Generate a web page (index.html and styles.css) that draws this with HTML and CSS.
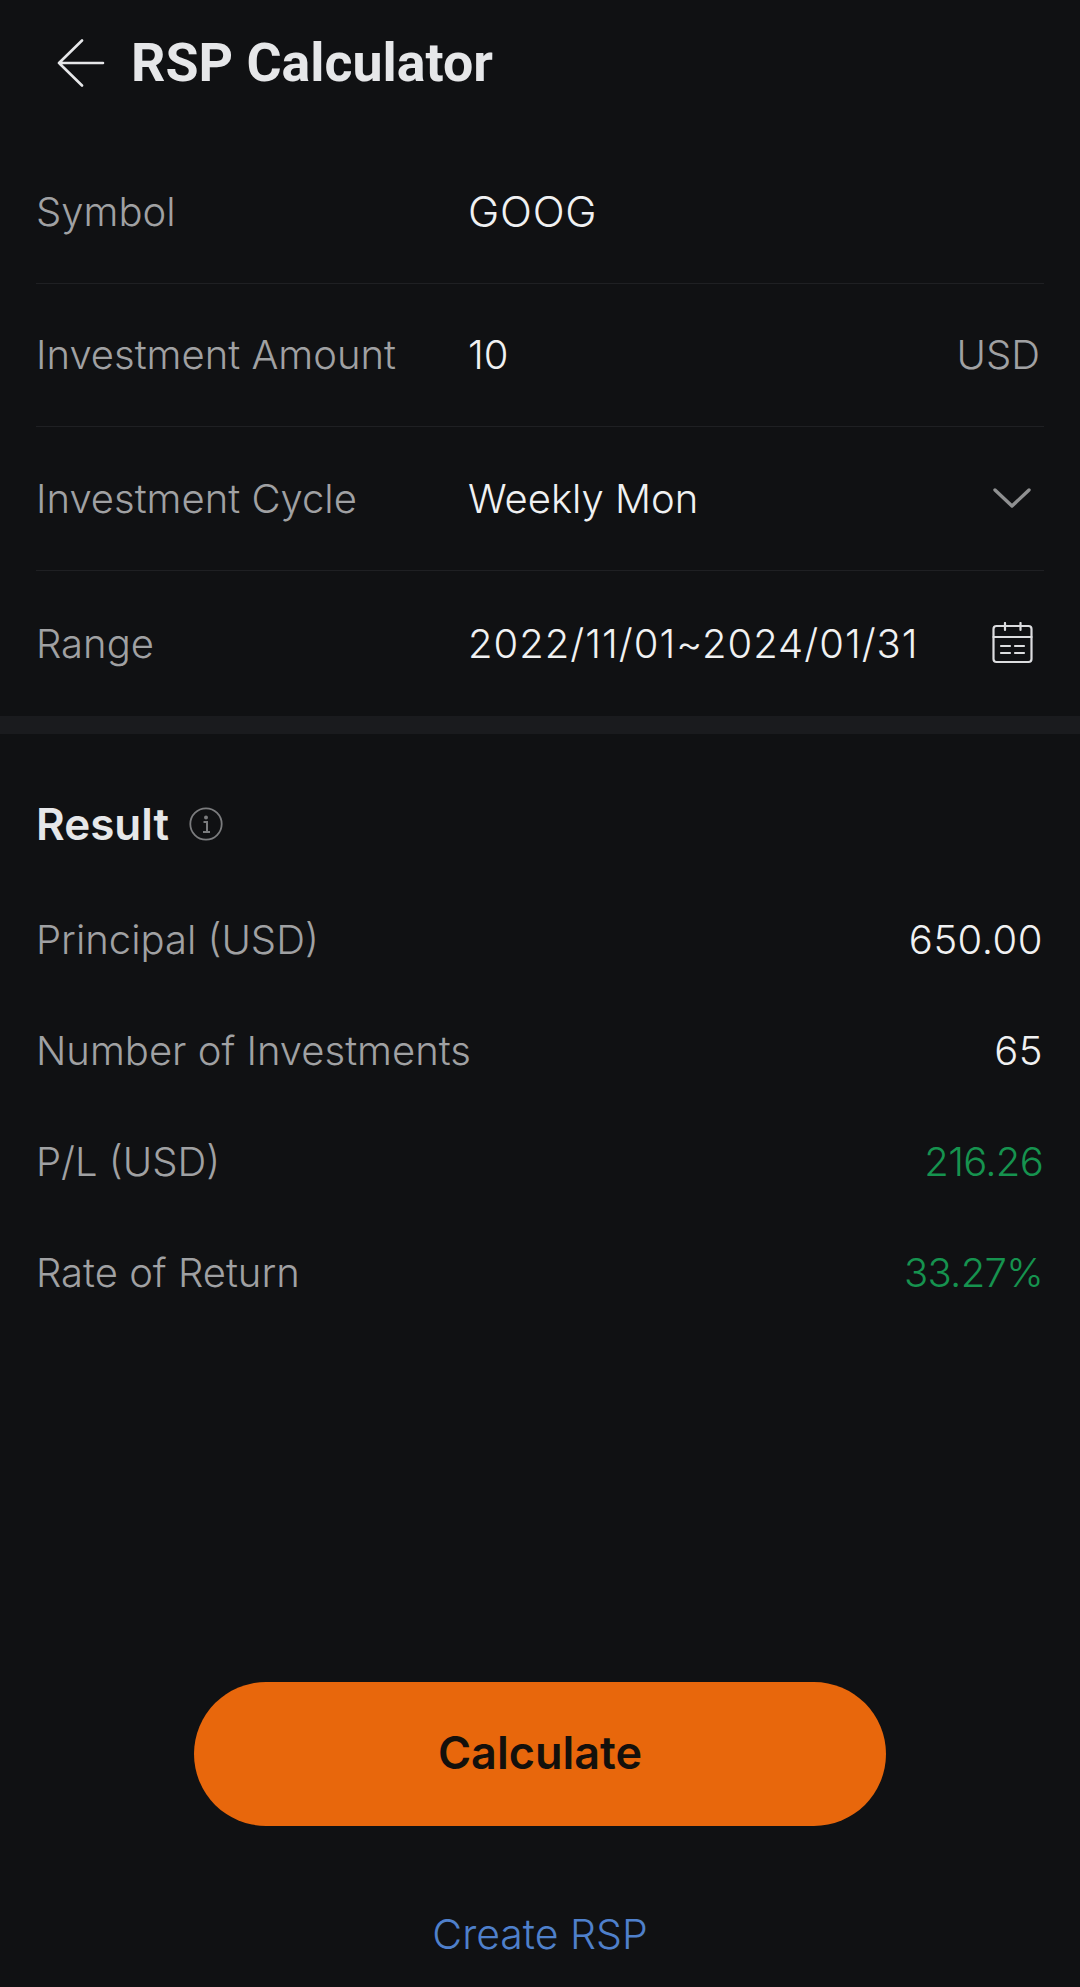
FILE: index.html
```html
<!DOCTYPE html>
<html lang="en">
<head>
<meta charset="utf-8">
<title>RSP Calculator</title>
<link rel="stylesheet" href="styles.css">
</head>
<body>
<div class="page">
  <header class="top">
    <svg class="back" width="48" height="48" viewBox="0 0 48 48" fill="none"><path d="M2 24H46M25 1.500L2 24L25 46.500" stroke="#e6e7e9" stroke-width="2.600" stroke-linecap="round" stroke-linejoin="round"/></svg>
    <h1 class="title">RSP Calculator</h1>
  </header>
  <section class="form">
    <div class="row"><span class="lab">Symbol</span><span class="val caps">GOOG</span></div>
    <div class="row"><span class="lab">Investment Amount</span><span class="val">10</span><span class="unit">USD</span></div>
    <div class="row"><span class="lab">Investment Cycle</span><span class="val">Weekly Mon</span>
      <svg class="chev" width="38" height="22" viewBox="0 0 38 22" fill="none"><path d="M2 3L19 19L36 3" stroke="#8f9091" stroke-width="3.400" stroke-linecap="round" stroke-linejoin="round"/></svg></div>
    <div class="row last"><span class="lab">Range</span><span class="val date">2022/11/01~2024/01/31</span>
      <svg class="cal" width="42" height="42" viewBox="0 0 42 42" fill="none" stroke="#dcdddf" stroke-width="2.200" stroke-linecap="round"><rect x="1.500" y="4" width="38" height="36" rx="3"/><path d="M1.500 15H39.500M13 1V8M28.500 1V8M9 24H18M23 24H32M9 31H18M23 31H32"/></svg></div>
  </section>
  <div class="band"></div>
  <section class="result">
    <div class="rhead"><h2 class="rtitle">Result</h2>
      <svg class="info" width="34" height="34" viewBox="0 0 34 34" fill="none"><circle cx="17" cy="17" r="15.700" stroke="#7b7c7e" stroke-width="1.800"/><circle cx="17" cy="10.500" r="2" fill="#7b7c7e"/><path d="M14.500 15H18V24.500M14 25H21" stroke="#7b7c7e" stroke-width="2"/></svg></div>
    <div class="rrow"><span class="lab">Principal (USD)</span><span class="num">650.00</span></div>
    <div class="rrow"><span class="lab">Number of Investments</span><span class="num">65</span></div>
    <div class="rrow"><span class="lab">P/L (USD)</span><span class="num up">216.26</span></div>
    <div class="rrow"><span class="lab">Rate of Return</span><span class="num up">33.27%</span></div>
  </section>
  <footer class="foot">
    <button class="calc" type="button">Calculate</button>
    <a class="create">Create RSP</a>
  </footer>
</div>
</body>
</html>
```
FILE: styles.css
```css
* { box-sizing: border-box; }
html, body { margin: 0; padding: 0; background: #101113; }
body { font-family: "Inter", "Noto Sans", sans-serif; }
.page { width: 1080px; height: 1987px; display: flex; flex-direction: column; background: #101113; }
.top { height: 140px; padding-bottom: 14px; display: flex; align-items: center; padding-left: 57px; gap: 26px; }
.back { flex: none; }
.title { margin: 0; font: 700 53.700px/60px "Roboto", sans-serif; color: #e6e7e9; }
.form { padding: 0 36px; display: flex; flex-direction: column; }
.row { height: 143.500px; display: flex; align-items: center; border-bottom: 1px solid #1f2023; }
.row.last { border-bottom: 0; height: 145px; }
.lab { font-size: 40px; font-weight: 300; color: #a0a1a3; }
.row .lab { width: 432px; flex: none; }
.val { font-size: 40px; font-weight: 300; color: #f0f1f2; flex: 1; }
.caps { font-size: 42px; letter-spacing: 0.800px; }
.date { letter-spacing: 1px; }
.unit { font-size: 40px; font-weight: 300; color: #a0a1a3; padding-right: 4px; }
.chev { flex: none; margin-right: 13px; }
.cal { flex: none; margin-right: 10px; }
.band { height: 18px; background: #1a1b1e; }
.result { padding: 0 36px; display: flex; flex-direction: column; }
.rhead { display: flex; align-items: center; gap: 20px; height: 90px; margin-top: 45px; margin-bottom: 15px; }
.rtitle { margin: 0; font-size: 44px; font-weight: 600; color: #e6e7e9; }
.rrow { height: 111px; display: flex; align-items: center; justify-content: space-between; }
.num { font-size: 40px; font-weight: 300; color: #f0f1f2; letter-spacing: 0.500px; padding-right: 1px; }
.up { color: #16934f; letter-spacing: -0.700px; }
.foot { margin-top: auto; display: flex; flex-direction: column; align-items: center; padding-bottom: 23px; }
.calc { width: 692px; height: 144px; padding: 0 0 3px; border: 0; border-radius: 72px; background: #e8670c; color: #14100c; font: 600 45px "Inter", sans-serif; }
.create { margin-top: 78px; font-size: 41px; font-weight: 300; color: #4f80cb; line-height: 60px; }
```
